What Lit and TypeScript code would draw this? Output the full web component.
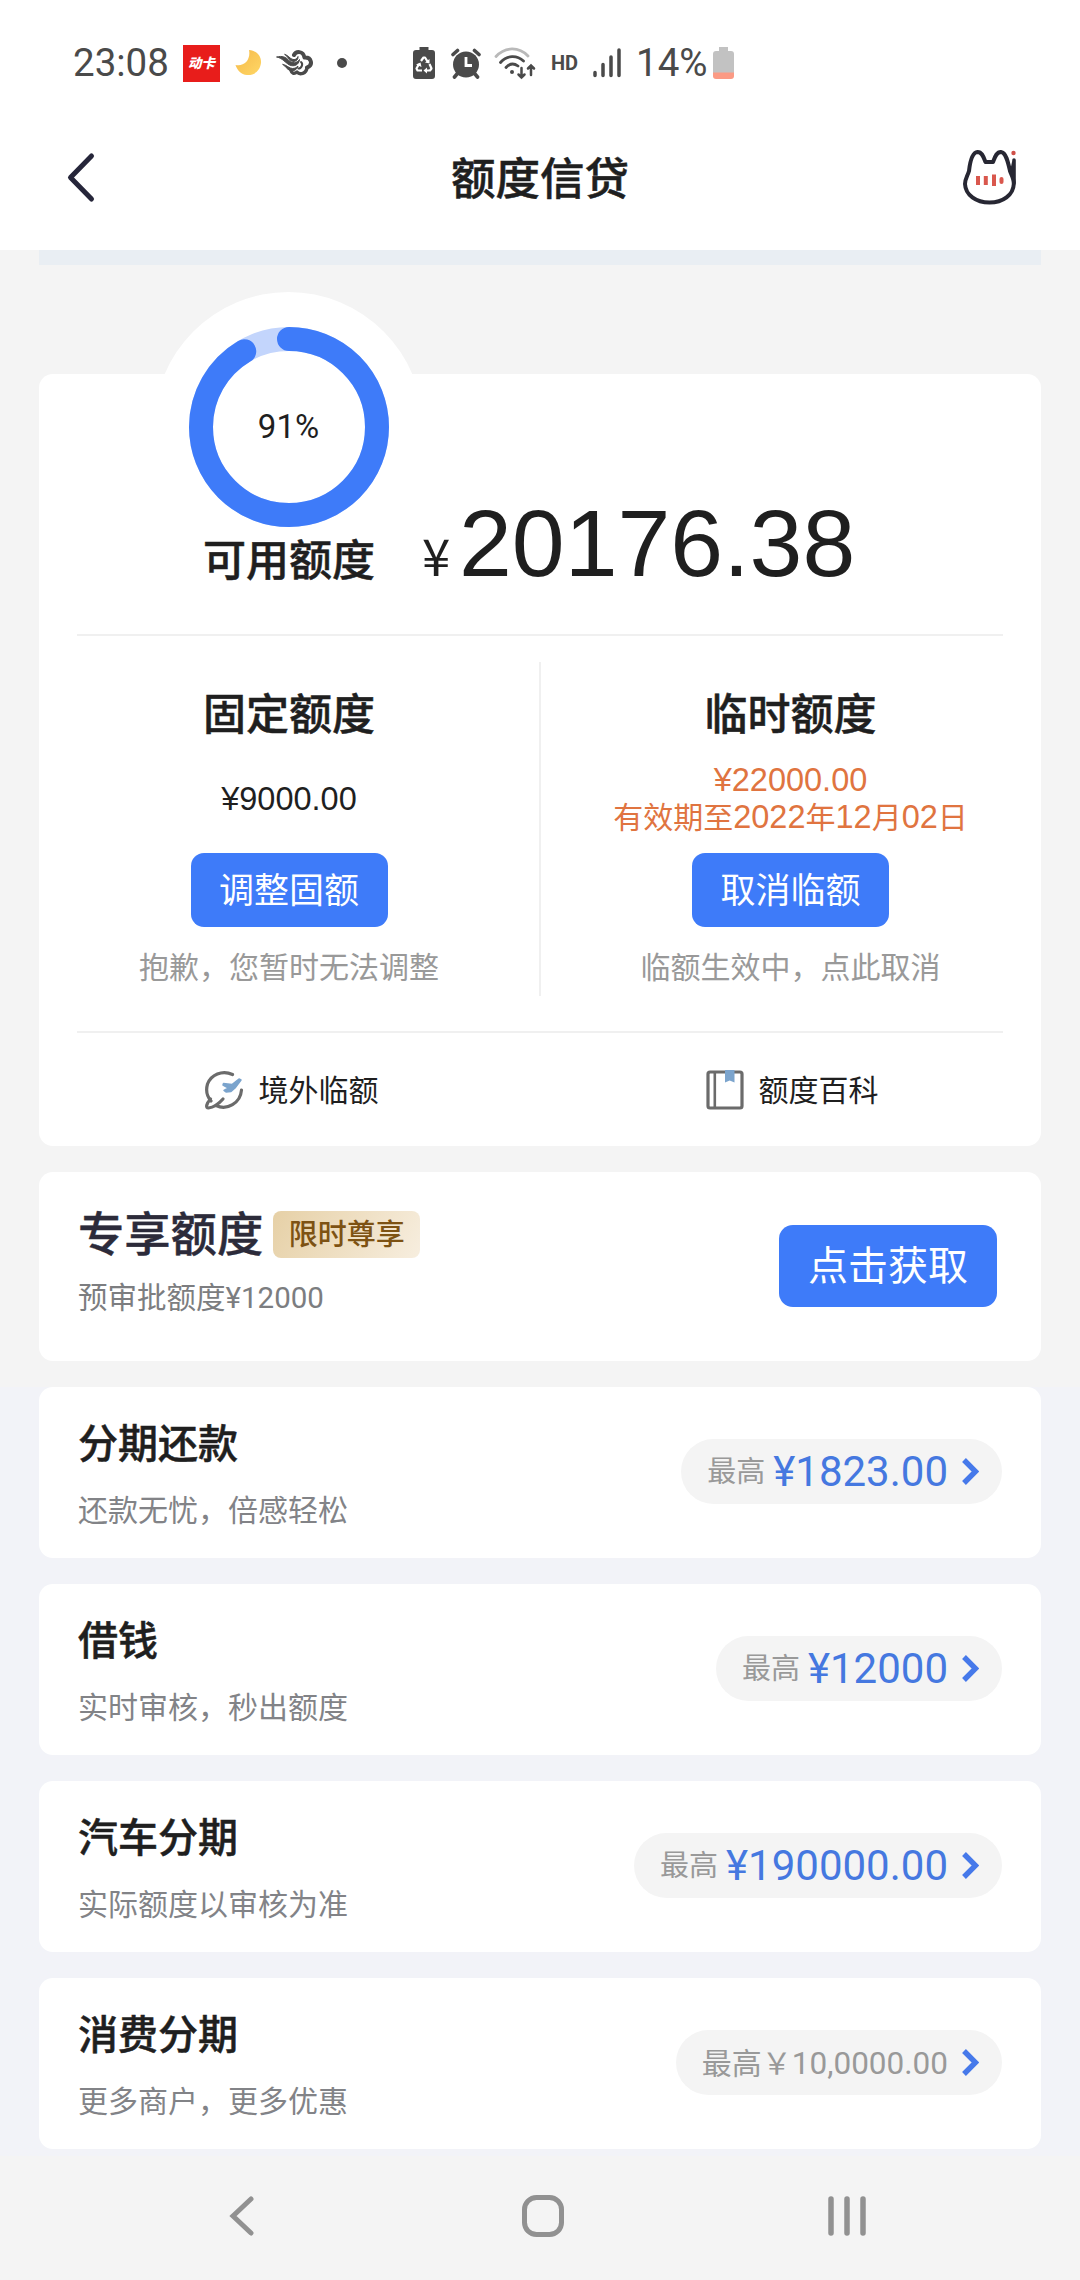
import { LitElement, html, css } from "lit";
import { customElement, property } from "lit/decorators.js";

const FONT = css`Roboto, "Noto Sans CJK SC", sans-serif`;

interface Product {
  title: string;
  note: string;
  amount: string;
  muted?: boolean;
}

const PRODUCTS: Product[] = [
  { title: "分期还款", note: "还款无忧，倍感轻松", amount: "¥1823.00" },
  { title: "借钱", note: "实时审核，秒出额度", amount: "¥12000" },
  { title: "汽车分期", note: "实际额度以审核为准", amount: "¥190000.00" },
  { title: "消费分期", note: "更多商户，更多优惠", amount: "10,0000.00", muted: true },
];

@customElement("status-bar")
export class StatusBar extends LitElement {
  static styles = css`
    :host { display: block; }
    svg { display: block; flex: none; }
    .bar {
      display: flex; align-items: center; height: 126px; padding-left: 73px;
      box-sizing: border-box; color: #4a4a4a; font-family: ${FONT};
    }
    .clock { width: 110px; font-size: 38.500px; line-height: 44px; white-space: nowrap; }
    .app {
      width: 37px; height: 37px; background: #e81d1b; color: #fff; font-size: 13.500px;
      line-height: 36px; font-weight: 900; font-style: italic; text-align: center;
    }
    .moon { margin-left: 15px; }
    .wind { margin-left: 14px; }
    .dot { width: 10px; height: 10px; margin-left: 23px; border-radius: 50%; background: #4a4a4a; }
    .saver { margin-left: 66px; }
    .alarm { margin-left: 16px; }
    .wifi { margin-left: 13px; }
    .hd { margin-left: 15px; width: 30px; font-size: 20px; line-height: 24px; font-weight: 700; }
    .signal { margin-left: 12px; }
    .percent { margin-left: 15px; width: 77px; font-size: 38.500px; line-height: 44px; white-space: nowrap; }
  `;

  render() {
    return html`<div class="bar">
      <span class="clock">23:08</span>
      <span class="app">动卡</span>
      <svg class="moon" width="27" height="26" viewBox="0 0 27 26">
        <defs><linearGradient id="m" x1="0" y1="0" x2="1" y2="1">
          <stop offset="0" stop-color="#f5b94a" /><stop offset="1" stop-color="#ffd765" />
        </linearGradient></defs>
        <path fill="url(#m)" d="M14 0C22 1 26.500 6 26 13C25 21 19 25.500 12 25C6 24.500 2 20 .500 15C9 17 16 10 14 0Z" />
      </svg>
      <svg class="wind" width="38" height="27" viewBox="0 0 38 27" fill="none" stroke="#4a4a4a" stroke-linecap="round" stroke-linejoin="round">
        <path stroke-width="4" d="M18 5C20 1 27 .500 28.500 7.500C35.500 7 37.500 15 31 17.500" />
        <path stroke-width="3.400" d="M31 17.500C30.500 24 23.500 25 21 22C18 24.500 15.500 23 15 20.500" />
        <path fill="#4a4a4a" stroke-width="1" d="M1 7C6 5.500 10 7 13 10.500C16 13.500 21 13.500 23.500 9.500C23 15 18 17 13.500 15C9 12.500 7 8.500 1 7Z" />
        <path fill="#4a4a4a" stroke-width="1" d="M9 4.500C12 5 14 9 17 9.500C20 10 21 8.500 22 6.500C22.500 10 19 12.500 15.500 11C12.500 9.500 12 6.500 9 4.500Z" />
        <path fill="#4a4a4a" stroke-width="1" d="M7 14.500C11 15 13 18.500 16.500 18.500C19 18.500 20.500 17.500 22 16C21.500 19.500 17.500 21.500 14 20.500C10.500 19 10 16.500 7 14.500Z" />
        <path stroke-width="2" d="M25 12C27.500 14 25.500 18.500 22.500 18.500" />
      </svg>
      <span class="dot"></span>
      <svg class="saver" width="22" height="32" viewBox="0 0 22 32">
        <path fill="#4a4a4a" d="M6.500 0H15.500V3H19Q22 3 22 6V29Q22 32 19 32H3Q0 32 0 29V6Q0 3 3 3H6.500Z" />
        <path fill="none" stroke="#fff" stroke-width="2.200" stroke-linejoin="round" d="M8 14L10.500 10.500H12L14.500 14.500M16.500 17L18.500 21.500L17 23.500H13M9 23.500H4.500L3.500 21.500L6 17" />
        <path fill="#fff" d="M12 15.500L16.500 16.500L16.500 12ZM14 20.500V26.500L10.500 23.500ZM3 17.500L7.500 15.500L8.500 20Z" />
      </svg>
      <svg class="alarm" width="30" height="31" viewBox="0 0 30 31">
        <circle cx="15" cy="16.500" r="13" fill="#4a4a4a" />
        <path fill="none" stroke="#4a4a4a" stroke-width="3.600" stroke-linecap="round" d="M2 6.500L6.500 2.500M28 6.500L23.500 2.500M6 26L3.500 29M24 26L26.500 29" />
        <path fill="none" stroke="#fff" stroke-width="2.800" d="M15 9V17.500H21" />
      </svg>
      <svg class="wifi" width="42" height="33" viewBox="0 0 42 33" fill="none" stroke="#4a4a4a" stroke-width="2.800" stroke-linecap="round">
        <path stroke="#b9b9b9" d="M2 9.500C11 -.500 25 -.500 34 9" />
        <path d="M6.500 15.500C13 8 23 8 29.500 14" />
        <path d="M12 20.500C16 16 20 16 24 19" />
        <circle cx="18" cy="25" r="2" fill="#4a4a4a" stroke="none" />
        <path stroke-width="2.500" d="M27.500 21V30.500M24.500 27.500L27.500 30.500L30.500 27.500M37 28V18.500M34 21.500L37 18.500L40 21.500" />
      </svg>
      <span class="hd">HD</span>
      <svg class="signal" width="28" height="30" viewBox="0 0 28 30" stroke="#4a4a4a" stroke-width="3.500" stroke-linecap="round">
        <path d="M2 24.500V27.500M10 16.500V27.500M18 9V27.500M26 2V27.500" />
      </svg>
      <span class="percent">14%</span>
      <svg width="21" height="32" viewBox="0 0 21 32">
        <path fill="#c2c2c2" d="M6 0H15V4H18Q21 4 21 7V26H0V7Q0 4 3 4H6Z" />
        <path fill="#fb9a84" d="M0 25.500H21V29Q21 32 18 32H3Q0 32 0 29Z" />
      </svg>
    </div>`;
  }
}

@customElement("title-bar")
export class TitleBar extends LitElement {
  static styles = css`
    :host { display: block; }
    svg { display: block; }
    .bar {
      display: grid; grid-template-columns: 1fr auto 1fr; align-items: center;
      height: 102px; padding: 0 63px 0 66px; color: #1f1f1f; font-family: ${FONT};
    }
    .title { font-size: 44.500px; line-height: 60px; font-weight: 500; margin: 5px 0 0 -3px; -webkit-text-stroke: 0.5px currentColor; }
    .cat { justify-self: end; }
  `;

  render() {
    return html`<div class="bar">
      <svg width="30" height="52" viewBox="0 0 30 52" fill="none" stroke="#26263a" stroke-width="5" stroke-linecap="round" stroke-linejoin="round">
        <path d="M25.500 5L4.500 26.500L25.500 48" />
      </svg>
      <span class="title">额度信贷</span>
      <svg class="cat" width="56" height="58" viewBox="0 0 56 58" fill="none" stroke="#272733" stroke-width="4" stroke-linecap="round" stroke-linejoin="round">
        <path d="M8 23C9 14 11 4.500 16.500 4C21 3.800 22.500 9 24.500 14H32C34 9 35.500 3.800 40 4C45 4.500 47 14 49 23C50.500 27 53 31 52.800 36C52.300 47 42 54.500 28.500 54.500C15 54.500 4.500 47 4 36C4 31 6.500 28 8 23Z" />
        <path d="M53 12V35M53 13L50.500 25" stroke-width="3.600" />
        <circle cx="52.500" cy="5" r="2.200" fill="#cf5048" stroke="none" />
        <path stroke="#d9574d" stroke-width="4" stroke-linecap="butt" d="M17 28V37M24.800 28V37M33 26.500V38" />
        <path stroke="#d9574d" stroke-width="4" d="M40.500 31V34" />
      </svg>
    </div>`;
  }
}

@customElement("usage-ring")
export class UsageRing extends LitElement {
  @property({ type: Number }) percent = 0;

  static styles = css`
    :host { display: block; }
    .plate {
      display: grid; place-items: center; width: 269px; height: 269px;
      border-radius: 50%; background: #fff;
    }
    .ring, .value { grid-area: 1 / 1; }
    .ring { display: block; }
    .value { font: 33px/40px ${FONT}; color: #1f1f1f; }
  `;

  render() {
    return html`<div class="plate">
      <svg class="ring" width="200" height="200" viewBox="0 0 200 200" fill="none" stroke-width="24">
        <circle cx="100" cy="100" r="88" stroke="#c3d5fc" />
        <circle cx="100" cy="100" r="88" stroke="#3e7bf9" stroke-linecap="round" pathLength="100"
          stroke-dasharray="${this.percent + 0.5} 100" transform="rotate(-90 100 100)" />
      </svg>
      <span class="value">${this.percent}%</span>
    </div>`;
  }
}

@customElement("quota-card")
export class QuotaCard extends LitElement {
  static styles = css`
    :host { display: block; }
    .card {
      display: flow-root; height: 772px; box-sizing: border-box; background: #fff; border-radius: 14px;
      color: #1f1f1f; font-family: ${FONT}; padding: 0 38px;
    }
    .ring { width: 269px; margin: -82px 0 0 77px; }
    .available { display: flex; align-items: baseline; height: 110px; margin-top: -73px; padding-left: 126px; position: relative; line-height: 110px; }
    .label { font-size: 43px; font-weight: 500; -webkit-text-stroke: 0.5px currentColor; }
    .yen { font-size: 51px; margin-left: 47px; width: 37px; font-family: "Noto Sans CJK SC", sans-serif; }
    .total { font-family: "Liberation Sans", Arial, sans-serif; font-size: 95px; }
    .split { display: grid; grid-template-columns: 1fr 1fr; height: 399px; margin-top: 36px; border: solid #f0f0f0; border-width: 2px 0; box-sizing: border-box; }
    .half { display: flex; flex-direction: column; align-items: center; padding-top: 51px; margin: 0 0 0 -38px; }
    .half.left { padding-right: 1px; }
    .half.right { margin: 0 -38px 0 0; }
    .name { font-size: 43px; line-height: 56px; font-weight: 500; -webkit-text-stroke: 0.5px currentColor; }
    .money { display: flex; flex-direction: column; justify-content: center; align-items: center; height: 84px; margin-top: 14px; line-height: 37px; font-size: 30px; white-space: nowrap; }
    .hot { color: #e07440; }
    .num { font-family: "Liberation Sans", Arial, sans-serif; font-size: 32.500px; }
    .button { width: 197px; height: 74px; margin-top: 12px; border-radius: 13px; background: #3e7bf9; color: #fff; font-size: 35px; line-height: 77px; text-align: center; }
    .hint { margin-top: 21px; font-size: 30px; line-height: 40px; color: #999; }
    .rule { width: 2px; height: 334px; background: #f0f0f0; margin: 26px 0 0 462px; grid-area: 1 / 1 / 2 / 3; }
    .left { grid-area: 1 / 1; }
    .right { grid-area: 1 / 2; }
    .links { display: grid; grid-template-columns: 1fr 1fr; margin: 0 -38px; height: 113px; align-items: center; font-size: 30px; line-height: 40px; }
    .link { display: flex; align-items: center; justify-content: center; gap: 15px; padding-left: 3px; }
    .link span { padding-top: 2px; }
    svg { display: block; }
  `;

  render() {
    return html`<section class="card">
      <usage-ring class="ring" percent="91"></usage-ring>
      <div class="available">
        <span class="label">可用额度</span><span class="yen">¥</span><span class="total">20176.38</span>
      </div>
      <div class="split">
        <div class="rule"></div>
        <div class="half left">
          <div class="name">固定额度</div>
          <div class="money"><span class="num">¥9000.00</span></div>
          <div class="button">调整固额</div>
          <div class="hint">抱歉，您暂时无法调整</div>
        </div>
        <div class="half right">
          <div class="name">临时额度</div>
          <div class="money hot">
            <span class="num">¥22000.00</span>
            <span>有效期至<span class="num">2022</span>年<span class="num">12</span>月<span class="num">02</span>日</span>
          </div>
          <div class="button">取消临额</div>
          <div class="hint">临额生效中，点此取消</div>
        </div>
      </div>
      <div class="links">
        <div class="link">
          <svg width="40" height="40" viewBox="0 0 40 40" fill="none" stroke="#6b6b6b" stroke-width="3.200" stroke-linecap="round">
            <path d="M28.500 4.500C18 -.500 7 5 3.500 14C1.500 21 3.500 27 7 31M12 35.500C23 41 36.500 33 37.500 20" />
            <path d="M6.500 29C2 34 1.500 38 4.500 38C9 37.500 15 33.500 19 29" />
            <path fill="#7ba4cd" stroke="#7ba4cd" stroke-width="1.500" stroke-linejoin="round" d="M19.500 13.500L28 14.500L35 9L37 10L31 18L27 21.500L22 22L20 20.500L24.500 18L19 15Z" />
          </svg>
          <span>境外临额</span>
        </div>
        <div class="link">
          <svg width="38" height="40" viewBox="0 0 38 40">
            <rect x="2" y="2" width="34" height="36" rx="2" fill="none" stroke="#6b6b6b" stroke-width="3.200" />
            <path d="M8.800 2V38" stroke="#6b6b6b" stroke-width="2.600" />
            <path fill="#7ba4cd" d="M19 0H28.500V12.500L23.700 10.500L19 12.500Z" />
          </svg>
          <span>额度百科</span>
        </div>
      </div>
    </section>`;
  }
}

@customElement("offer-card")
export class OfferCard extends LitElement {
  static styles = css`
    :host { display: block; }
    .card {
      display: flex; justify-content: space-between; height: 189px; box-sizing: border-box;
      padding: 39px 44px 0 39px; background: #fff; border-radius: 14px; font-family: ${FONT};
    }
    .head { display: flex; align-items: center; gap: 10px; height: 47px; }
    .name { font-size: 46.300px; line-height: 60px; font-weight: 500; color: #2c2b3a; -webkit-text-stroke: 0.4px currentColor; }
    .tag { width: 147px; height: 47px; border-radius: 8px; background: linear-gradient(120deg, #e6d0a6, #f7eedf); color: #7d5213; font-size: 29px; line-height: 48px; font-weight: 500; text-align: center; }
    .note { margin-top: 20px; font-size: 29.500px; line-height: 40px; color: #7c7d80; }
    .button { width: 218px; height: 82px; margin-top: 14px; border-radius: 14px; background: #3e7bf9; color: #fff; font-size: 40px; line-height: 84px; text-align: center; }
  `;

  render() {
    return html`<section class="card">
      <div>
        <div class="head"><span class="name">专享额度</span><span class="tag">限时尊享</span></div>
        <div class="note">预审批额度¥12000</div>
      </div>
      <div class="button">点击获取</div>
    </section>`;
  }
}

@customElement("product-card")
export class ProductCard extends LitElement {
  @property({ attribute: false }) product!: Product;

  static styles = css`
    :host { display: block; }
    .card {
      display: flex; justify-content: space-between; align-items: flex-start; height: 171px; box-sizing: border-box;
      padding: 30px 39px 0 39px; background: #fff; border-radius: 14px; font-family: ${FONT};
    }
    .name { font-size: 40px; line-height: 56px; font-weight: 500; color: #1f1f1f; -webkit-text-stroke: 0.5px currentColor; }
    .note { margin-top: 18px; font-size: 30px; line-height: 40px; color: #828387; }
    .pill { display: flex; align-items: center; height: 65px; margin-top: 22px; padding: 0 23px 0 26px; border-radius: 33px; background: #f4f4f4; color: #999; white-space: nowrap; line-height: 64px; }
    .max { font-size: 29px; }
    .amount { margin-left: 8px; font-size: 42px; color: #4578e0; }
    .plain { font-size: 30px; padding-top: 2px; }
    .digits { font-size: 31.500px; }
    svg { display: block; margin-left: 14px; }
  `;

  render() {
    const { title, note, amount, muted } = this.product;
    return html`<section class="card">
      <div>
        <div class="name">${title}</div>
        <div class="note">${note}</div>
      </div>
      <div class="pill">
        ${muted
          ? html`<span class="plain">最高￥<span class="digits">${amount}</span></span>`
          : html`<span class="max">最高</span><span class="amount">${amount}</span>`}
        <svg width="17" height="27" viewBox="0 0 17 27" fill="none" stroke="#4679ea" stroke-width="5.400">
          <path d="M2 2L13.500 13.500L2 25" />
        </svg>
      </div>
    </section>`;
  }
}

@customElement("nav-bar")
export class NavBar extends LitElement {
  static styles = css`
    :host { display: block; }
    .bar { display: flex; justify-content: space-between; align-items: center; height: 124px; box-sizing: border-box; padding: 0 213px 4px 228px; background: #f4f4f4; }
    svg { display: block; }
    .home { margin-left: 5px; }
  `;

  render() {
    return html`<div class="bar">
      <svg width="26" height="44" viewBox="0 0 26 44" fill="none" stroke="#919191" stroke-width="5" stroke-linecap="round">
        <path d="M23 5L5 22L23 39" />
      </svg>
      <svg class="home" width="42" height="42" viewBox="0 0 42 42">
        <rect x="2.500" y="2.500" width="37" height="37" rx="12" fill="none" stroke="#919191" stroke-width="5" />
      </svg>
      <svg width="40" height="42" viewBox="0 0 40 42" stroke="#919191" stroke-width="5.500" stroke-linecap="round">
        <path d="M4 4V38M20 4V38M36 4V38" />
      </svg>
    </div>`;
  }
}

@customElement("app-root")
export class AppRoot extends LitElement {
  static styles = css`
    :host { display: block; width: 1080px; height: 2280px; overflow: hidden; }
    .page { display: flex; flex-direction: column; height: 2280px; background: #fff; }
    .top { height: 250px; display: flex; flex-direction: column; box-sizing: border-box; }
    .upper { height: 1137px; padding: 0 39px; box-sizing: border-box; background: #f4f4f4; }
    .strip { height: 15px; background: #e9eef3; margin-bottom: 109px; }
    .offer { margin-top: 26px; }
    .list { display: flex; flex-direction: column; gap: 26px; height: 769px; box-sizing: border-box; padding: 0 39px; background: #f2f3f8; }
  `;

  render() {
    return html`<div class="page">
      <div class="top"><status-bar></status-bar><title-bar></title-bar></div>
      <div class="upper">
        <div class="strip"></div>
        <quota-card></quota-card>
        <offer-card class="offer"></offer-card>
      </div>
      <div class="list">
        ${PRODUCTS.map((p) => html`<product-card .product=${p}></product-card>`)}
      </div>
      <nav-bar></nav-bar>
    </div>`;
  }
}
